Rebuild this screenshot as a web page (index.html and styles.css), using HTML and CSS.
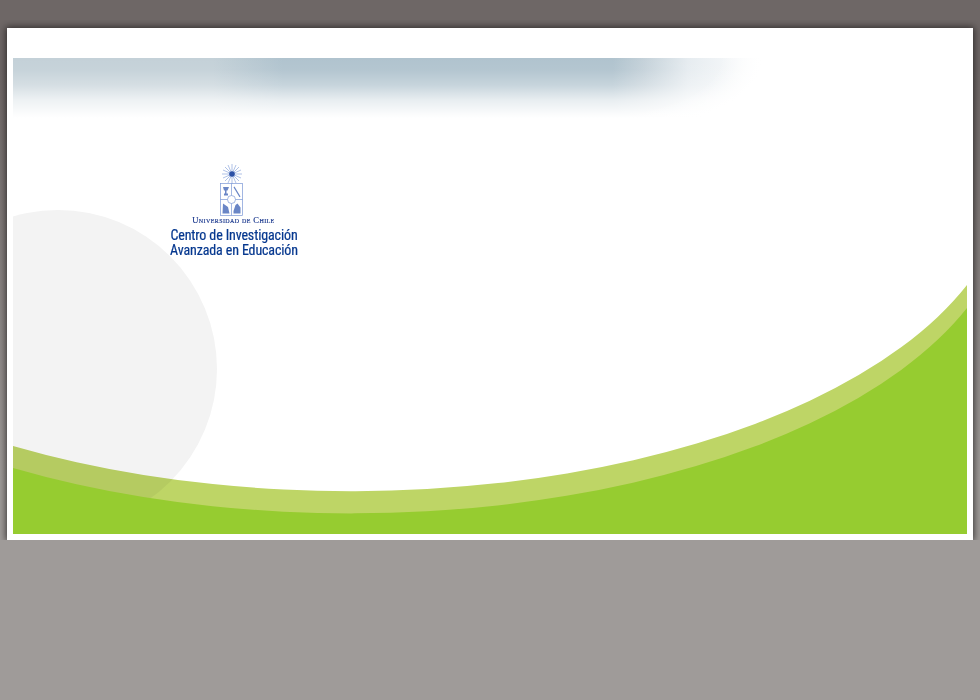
FILE: index.html
```html
<!DOCTYPE html>
<html lang="es">
<head>
<meta charset="utf-8">
<title>Centro de Investigación Avanzada en Educación</title>
<link rel="stylesheet" href="styles.css">
</head>
<body>
<main class="card">
  <div class="art">
    <div class="haze"></div>
    <div class="circle"></div>
    <svg class="waves" viewBox="0 0 954 476" aria-hidden="true">
      <path class="band" d="M0 388 A660 321 0 0 0 954 227 L954 476 L0 476 Z"/>
      <path class="solid" d="M0 410 A660 321 0 0 0 954 250 L954 476 L0 476 Z"/>
    </svg>
    <div class="logo">
      <svg class="crest" viewBox="0 0 30 52" aria-hidden="true">
        <path class="rays" d="M15 0V20M5 10H25M8 3L22 17M22 3L8 17M11 1L19 19M19 1L11 19M6 6L24 14M24 6L6 14"/>
        <circle class="sun" cx="15" cy="10" r="2.800"/>
        <g class="shield">
          <rect x="3.500" y="19.500" width="22" height="32"/>
          <path d="M14.500 19.500V51.500M3.500 35.500H25.500"/>
          <circle cx="14.500" cy="35.500" r="4"/>
        </g>
        <path class="charges" d="M6 23h6l-1.500 3.500h-1v3h1.500v2h-4v-2h1v-3h-1zM17.500 22.500l6 10-1 .8-6-10zM6 39.500l5 3.500 1.500 6.500h-7zM16.500 47l2-6 2 -1.500 3 4v6h-7z"/>
      </svg>
      <div class="uni">Universidad de Chile</div>
      <div class="centro">Centro de Investigación<br>Avanzada en Educación</div>
    </div>
  </div>
</main>
</body>
</html>
```
FILE: styles.css
```css
html, body { margin: 0; height: 100%; }
body {
  width: 980px;
  height: 700px;
  overflow: hidden;
  background: linear-gradient(#6e6766 0, #6e6766 70px, #9f9b99 480px, #9f9b99 100%);
  padding-top: 28px;
  box-sizing: border-box;
}
.card {
  width: 954px;
  height: 476px;
  margin-left: 7px;
  padding: 30px 6px 6px;
  background: #fff;
  box-shadow: 0 0 7px 1px rgba(30, 28, 28, .8);
  clip-path: inset(-8px -8px 0 -8px);
}
.art {
  position: relative;
  width: 954px;
  height: 476px;
  overflow: hidden;
}
.haze {
  width: 750px;
  height: 60px;
  background:
    radial-gradient(ellipse 170px 76px at 0 0, rgba(255,255,255,0) 75%, #fff 100%) right top / 170px 60px no-repeat,
    linear-gradient(rgba(255,255,255,0) 0, rgba(255,255,255,.05) 20%, rgba(255,255,255,.29) 45%, rgba(255,255,255,.71) 70%, rgba(255,255,255,.93) 92%, #fff 100%),
    linear-gradient(90deg, #c4d1d8 0, #c4d1d8 200px, #b0c3ce 270px, #b0c3ce 600px, #c4d1d9 630px, #e6ecf0 675px, #fff 750px);
}
.circle {
  position: absolute;
  left: -114px;
  top: 152px;
  width: 318px;
  height: 318px;
  border-radius: 50%;
  background: #f3f3f3;
}
.waves {
  position: absolute;
  inset: 0;
  width: 954px;
  height: 476px;
}
.band { fill: #bed566; mix-blend-mode: multiply; }
.solid { fill: #96cc30; }
.logo {
  position: absolute;
  left: 151px;
  top: 106px;
  width: 140px;
  display: flex;
  flex-direction: column;
  align-items: center;
}
.crest {
  width: 30px;
  height: 52px;
  margin-left: -5px;
}
.rays { stroke: #7b98d6; stroke-width: .6; fill: none; }
.sun { fill: #2a50a6; }
.shield { fill: none; stroke: #7b98d6; stroke-width: .7; }
.shield circle { fill: #fff; }
.charges { fill: #6a86c6; }
.uni {
  font: 8.500px/9px "Liberation Serif", serif;
  font-variant: small-caps;
  color: #12318a;
  margin-left: -1px;
  white-space: nowrap;
  letter-spacing: .4px;
  -webkit-text-stroke: .15px #12318a;
}
.centro {
  font: 14px/15px "Liberation Sans Narrow", "Roboto Condensed", Lato, sans-serif;
  letter-spacing: -.13px;
  color: #06388f;
  white-space: nowrap;
  text-align: center;
  margin-top: 3px;
  -webkit-text-stroke: .2px #06388f;
}
```
